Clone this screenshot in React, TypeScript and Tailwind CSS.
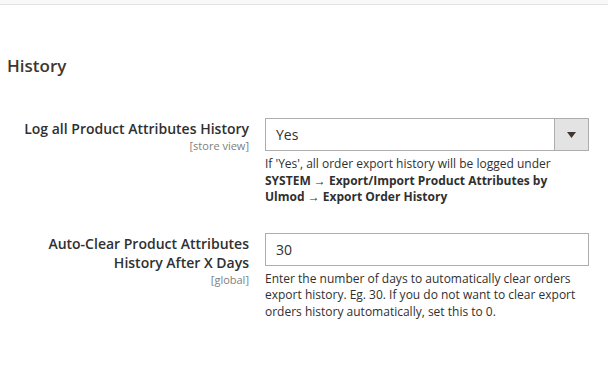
import React from "react";

const Field = ({
  label,
  scope,
  children,
  note,
}: {
  label: React.ReactNode;
  scope: string;
  children: React.ReactNode;
  note: React.ReactNode;
}) => (
  <div className="flex gap-4">
    <div className="w-[249px] shrink-0 text-right pt-px">
      <div className="text-[14px] leading-[19px] font-semibold text-[#303030]">{label}</div>
      <div className="text-[11px] leading-[13px] text-[#808080] mt-px">{scope}</div>
    </div>
    <div className="w-[324px]">
      {children}
      <p className="mt-[5px] text-[12px] leading-[16.5px] text-[#303030]">{note}</p>
    </div>
  </div>
);

const App = () => {
  return (
    <main className="bg-white w-[608px] h-[377px] overflow-hidden font-['Open_Sans',sans-serif]">
      <div className="h-[5px] bg-[#f8f8f8] border-b border-[#e3e3e3]" />
      <h2 className="mt-[50px] pl-[7px] text-[17px] leading-[22px] font-semibold text-[#41362f]">History</h2>
      <div className="mt-[41px] flex flex-col gap-[27px]">
        <Field
          label="Log all Product Attributes History"
          scope="[store view]"
          note={
            <>
              If 'Yes', all order export history will be logged under{" "}
              <b className="font-bold">SYSTEM → Export/Import Product Attributes by Ulmod → Export Order History</b>
            </>
          }
        >
          <div className="flex h-[33px] border border-[#adadad] bg-white">
            <span className="flex-1 pl-[10px] text-[14px] leading-[31px] text-[#303030]">Yes</span>
            <span className="w-[34px] flex items-center justify-center bg-[#e3e3e3] border-l border-[#adadad]">
              <svg width="9" height="6" viewBox="0 0 9 6">
                <path d="M0 0h9L4.5 6z" fill="#41362f" />
              </svg>
            </span>
          </div>
        </Field>
        <Field
          label={
            <>
              Auto-Clear Product Attributes
              <br />
              History After X Days
            </>
          }
          scope="[global]"
          note="Enter the number of days to automatically clear orders export history. Eg. 30. If you do not want to clear export orders history automatically, set this to 0."
        >
          <div className="h-[33px] border border-[#adadad] pl-[10px] text-[14px] leading-[31px] text-[#303030]">30</div>
        </Field>
      </div>
    </main>
  );
};

export default App;
